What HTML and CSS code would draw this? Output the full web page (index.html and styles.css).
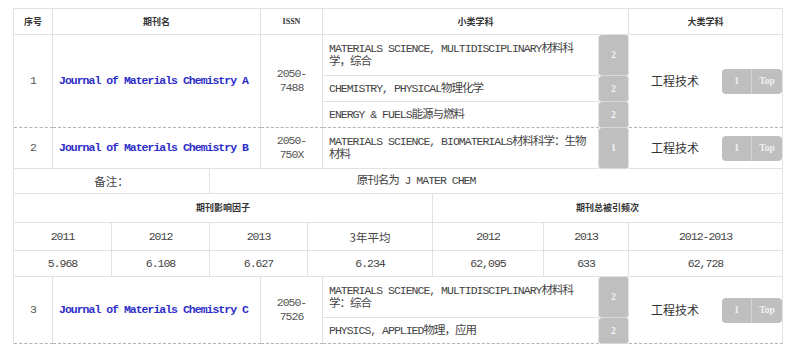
FILE: index.html
```html
<!DOCTYPE html>
<html lang="zh-CN">
<head>
<meta charset="utf-8">
<title>期刊列表</title>
<link rel="stylesheet" href="styles.css">
</head>
<body>
<div class="wrap">
  <table class="jt jt-top">
    <colgroup><col class="c-no"><col class="c-name"><col class="c-issn"><col class="c-sub"><col class="c-badge"><col class="c-big"></colgroup>
    <thead>
      <tr class="hrow">
        <th>序号</th>
        <th>期刊名</th>
        <th class="issn-h">ISSN</th>
        <th colspan="2">小类学科</th>
        <th>大类学科</th>
      </tr>
    </thead>
    <tbody>
      <tr class="r2l">
        <td rowspan="3" class="no dash">1</td>
        <td rowspan="3" class="name dash">Journal of Materials Chemistry A</td>
        <td rowspan="3" class="issn dash">2050-<br>7488</td>
        <td class="sub">MATERIALS SCIENCE, MULTIDISCIPLINARY材料科学，综合</td>
        <td class="badge">2</td>
        <td rowspan="3" class="big dash"><div class="bigin"><span class="bigtxt">工程技术</span><span class="grp"><span class="g1">1</span><span class="g2">Top</span></span></div></td>
      </tr>
      <tr class="r1l">
        <td class="sub">CHEMISTRY, PHYSICAL物理化学</td>
        <td class="badge">2</td>
      </tr>
      <tr class="r1l">
        <td class="sub dash">ENERGY &amp; FUELS能源与燃料</td>
        <td class="badge dash">2</td>
      </tr>
      <tr class="r2l">
        <td class="no">2</td>
        <td class="name">Journal of Materials Chemistry B</td>
        <td class="issn">2050-<br>750X</td>
        <td class="sub">MATERIALS SCIENCE, BIOMATERIALS材料科学：生物材料</td>
        <td class="badge">1</td>
        <td class="big"><div class="bigin"><span class="bigtxt">工程技术</span><span class="grp"><span class="g1">1</span><span class="g2">Top</span></span></div></td>
      </tr>
    </tbody>
  </table>

  <table class="jt">
    <colgroup><col class="n1"><col class="n2"><col class="n3"><col class="n4"><col class="n5"><col class="n6"><col class="n7"></colgroup>
    <tbody>
      <tr class="note-row">
        <td colspan="2" class="cj">备注：</td>
        <td colspan="5" class="note">原刊名为 J MATER CHEM</td>
      </tr>
      <tr class="sec-row">
        <th colspan="4">期刊影响因子</th>
        <th colspan="3">期刊总被引频次</th>
      </tr>
      <tr class="yr-row">
        <td>2011</td><td>2012</td><td>2013</td><td class="cj">3年平均</td><td>2012</td><td>2013</td><td>2012-2013</td>
      </tr>
      <tr class="val-row">
        <td>5.968</td><td>6.108</td><td>6.627</td><td>6.234</td><td>62,095</td><td>633</td><td>62,728</td>
      </tr>
    </tbody>
  </table>

  <table class="jt">
    <colgroup><col class="c-no"><col class="c-name"><col class="c-issn"><col class="c-sub"><col class="c-badge"><col class="c-big"></colgroup>
    <tbody>
      <tr class="r2l">
        <td rowspan="2" class="no dash">3</td>
        <td rowspan="2" class="name dash">Journal of Materials Chemistry C</td>
        <td rowspan="2" class="issn dash">2050-<br>7526</td>
        <td class="sub">MATERIALS SCIENCE, MULTIDISCIPLINARY材料科学：综合</td>
        <td class="badge">2</td>
        <td rowspan="2" class="big dash"><div class="bigin"><span class="bigtxt">工程技术</span><span class="grp"><span class="g1">1</span><span class="g2">Top</span></span></div></td>
      </tr>
      <tr class="r1l">
        <td class="sub dash">PHYSICS, APPLIED物理，应用</td>
        <td class="badge dash">2</td>
      </tr>
    </tbody>
  </table>
</div>
</body>
</html>
```

FILE: styles.css
```css
html, body {
  margin: 0;
  padding: 0;
  background: #ffffff;
}
body {
  padding: 8px 0 0 13px;
  font-family: "Liberation Mono", "Noto Sans CJK SC", monospace;
  color: #444;
}
.wrap {
  width: 769px;
}
.jt {
  width: 769px;
  table-layout: fixed;
  border-collapse: separate;
  border-spacing: 0;
  border-left: 1px solid #e2e2e2;
}
.jt-top {
  border-top: 1px solid #e2e2e2;
}
.jt td, .jt th {
  box-sizing: border-box;
  padding: 0;
  border-right: 1px solid #e2e2e2;
  border-bottom: 1px solid #e2e2e2;
  text-align: center;
  vertical-align: middle;
  font-size: 11.5px;
  letter-spacing: -1px;
  line-height: 14px;
  font-weight: normal;
  color: #444;
}
.c-no { width: 39px; }
.c-name { width: 208px; }
.c-issn { width: 62px; }
.c-sub { width: 276px; }
.c-badge { width: 30px; }
.c-big { width: 154px; }

.n1 { width: 98px; }
.n2 { width: 98px; }
.n3 { width: 98px; }
.n4 { width: 125px; }
.n5 { width: 111px; }
.n6 { width: 85px; }
.n7 { width: 154px; }

.jt th {
  font-family: "Noto Sans CJK SC", sans-serif;
  font-weight: bold;
  font-size: 9px;
  letter-spacing: 0;
  color: #333;
}
.hrow th { height: 26px; }
.jt .issn-h {
  font-family: "Liberation Serif", serif;
  font-size: 8px;
  letter-spacing: 0;
}
.r2l td { height: 41px; }
.r1l td { height: 26px; }
.jt td.dash {
  border-bottom: 1px dashed #b4b4b4;
}
.jt td.no {
  color: #555;
}
.jt td.name {
  text-align: left;
  padding-left: 6px;
  color: #2d2dc8;
  font-weight: bold;
}
.jt td.issn {
  color: #555;
}
.jt td.sub {
  text-align: left;
  padding: 0 10px 0 6px;
  line-height: 13px;
  color: #444;
}
.jt td.badge {
  background: #bfbfbf;
  color: #f2f2f2;
  font-family: "Liberation Serif", serif;
  font-weight: bold;
  font-size: 10px;
  letter-spacing: 0;
  border-radius: 3px;
  border-bottom: 1px solid #d8d8d8;
}
.jt td.big {
  padding: 0;
}
.bigin {
  display: flex;
  align-items: center;
  padding-left: 22px;
}
.bigtxt {
  font-family: "Noto Sans CJK SC", sans-serif;
  font-size: 12px;
  letter-spacing: 0;
  color: #333;
}
.grp {
  margin-left: auto;
  display: flex;
  height: 25px;
  border-radius: 4px;
  overflow: hidden;
  background: #bfbfbf;
}
.g1, .g2 {
  display: flex;
  align-items: center;
  justify-content: center;
  width: 29px;
  font-family: "Liberation Serif", serif;
  font-weight: bold;
  font-size: 9.5px;
  letter-spacing: 0;
  color: #f2f2f2;
}
.g2 {
  border-left: 1px solid #d6d6d6;
  width: 30px;
}
.cj {
  font-family: "Noto Sans CJK SC", sans-serif;
}
.jt td.cj {
  letter-spacing: 0;
  font-size: 11.5px;
  color: #444;
}
.note-row td { height: 25px; }
.jt td.note {
  padding-right: 160px;
  color: #444;
}
.sec-row th { height: 29px; }
.yr-row td { height: 28px; }
.val-row td { height: 26px; }
```
